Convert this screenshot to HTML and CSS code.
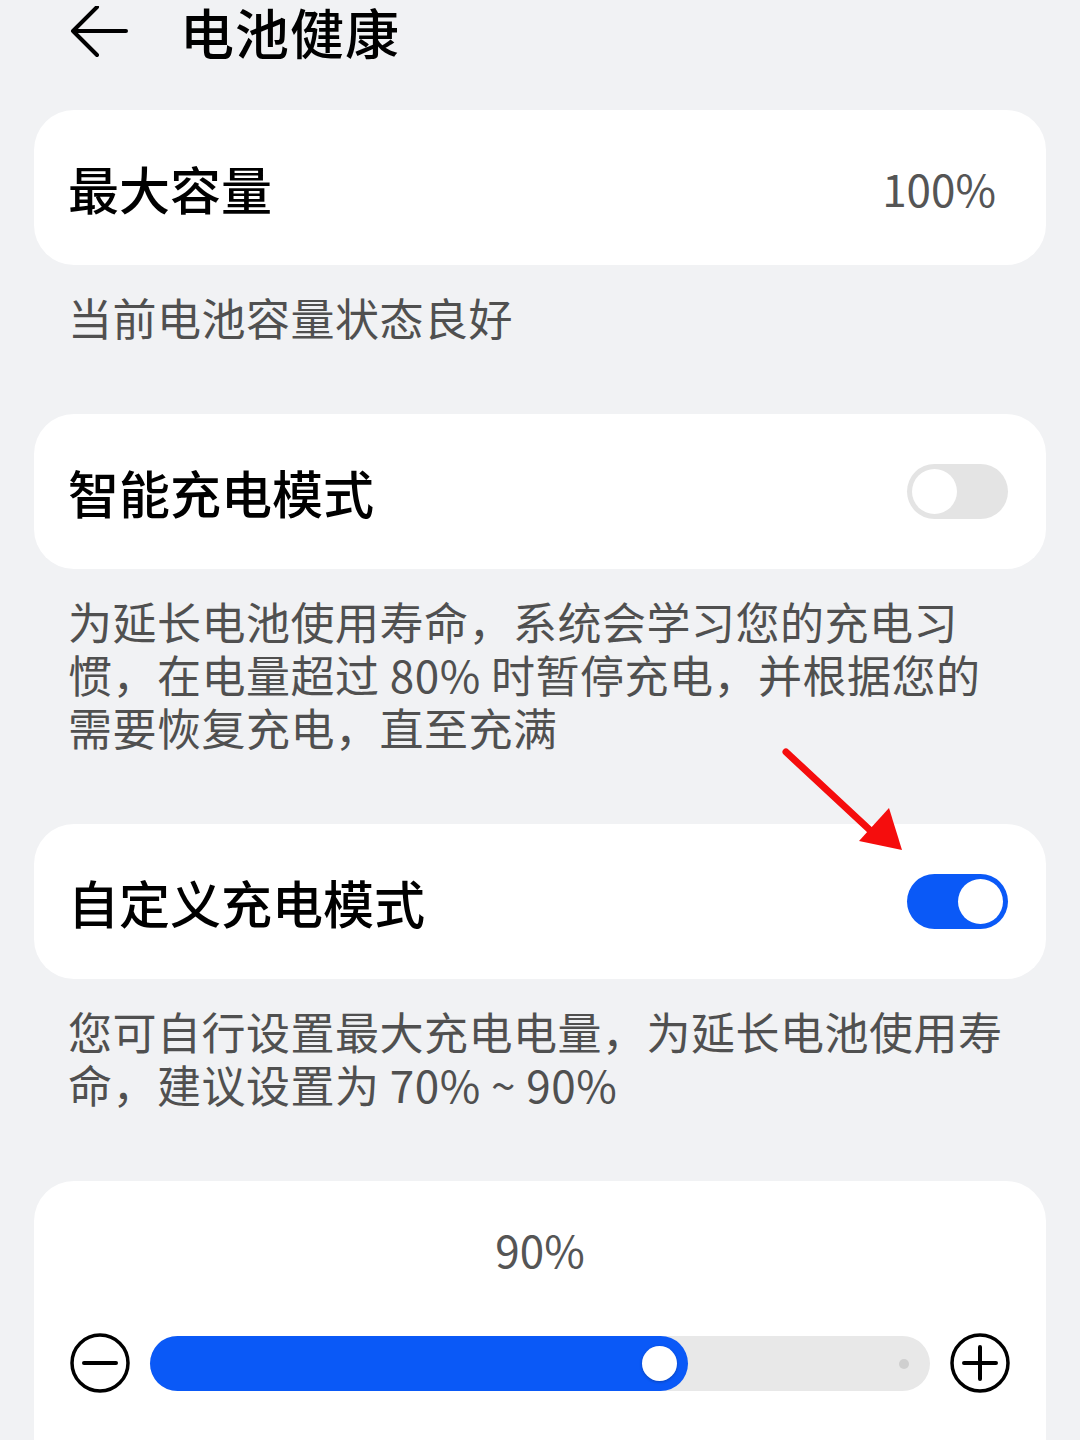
FILE: index.html
```html
<!DOCTYPE html>
<html lang="zh-CN">

<head>
    <meta charset="UTF-8">
    <meta name="viewport" content="width=device-width, initial-scale=1.0">
    <title>电池健康</title>
    <link rel="stylesheet" href="styles.css">
</head>

<body>
    <div class="page">
        <div class="header">
            <svg class="back" width="60" height="54" viewBox="0 0 60 54">
                <path d="M3 25 L56 25 M27 1 L3 25 L27 49" fill="none" stroke="#000" stroke-width="4" stroke-linecap="round" stroke-linejoin="round" />
            </svg>
            <h1 class="title">电池健康</h1>
        </div>

        <div class="card row">
            <span class="label">最大容量</span>
            <span class="value">100%</span>
        </div>
        <p class="desc">当前电池容量状态良好</p>

        <div class="card row">
            <span class="label">智能充电模式</span>
            <span class="switch"><i></i></span>
        </div>
        <p class="desc">为延长电池使用寿命，系统会学习您的充电习惯，在电量超过 80% 时暂停充电，并根据您的需要恢复充电，直至充满</p>

        <div class="card row">
            <span class="label">自定义充电模式</span>
            <span class="switch on"><i></i></span>
        </div>
        <p class="desc">您可自行设置最大充电电量，为延长电池使用寿命，建议设置为 70% ~ 90%</p>

        <div class="card slider-card">
            <div class="level">90%</div>
            <div class="slider">
                <svg class="step" width="62" height="62" viewBox="0 0 62 62">
                    <circle cx="31" cy="31" r="28" fill="none" stroke="#000" stroke-width="3.5" />
                    <path d="M15 31 H47" stroke="#000" stroke-width="4" stroke-linecap="round" />
                </svg>
                <div class="track">
                    <div class="fill" style="width: 69%"><span class="thumb"></span></div>
                    <span class="dot"></span>
                </div>
                <svg class="step" width="62" height="62" viewBox="0 0 62 62">
                    <circle cx="31" cy="31" r="28" fill="none" stroke="#000" stroke-width="3.5" />
                    <path d="M15 31 H47 M31 15 V47" stroke="#000" stroke-width="4" stroke-linecap="round" />
                </svg>
            </div>
        </div>

        <!-- 标注箭头 -->
        <svg class="mark" width="130" height="120" viewBox="0 0 130 120">
            <path d="M6 6 L92 86" stroke="#f50d0d" stroke-width="7" stroke-linecap="round" />
            <polygon points="109,62 122,104 79,95" fill="#f50d0d" />
        </svg>
    </div>
</body>

</html>
```

FILE: styles.css
```css
body,
h1,
p {
    margin: 0;
    padding: 0;
}

body {
    background: #f1f2f4;
    font-family: "Noto Sans CJK SC", "Noto Sans", sans-serif;
    color: #000;
}

.page {
    position: relative;
    width: 1080px;
    height: 1440px;
    overflow: hidden;
}

.header {
    display: flex;
    align-items: center;
    height: 64px;
    padding-left: 70px;
}

.back {
    display: block;
    margin-top: 2px;
}

.title {
    margin-left: 50px;
    font-size: 54px;
    font-weight: 500;
    line-height: 64px;
    letter-spacing: 1px;
}

.card {
    margin: 46px 34px 0;
    background: #fff;
    border-radius: 40px;
}

.card.row {
    display: flex;
    align-items: center;
    justify-content: space-between;
    height: 155px;
    padding: 0 38px 0 34px;
    box-sizing: border-box;
}

.label {
    font-size: 51px;
    font-weight: 500;
}

.value {
    margin-right: 12px;
    font-size: 44px;
    color: #555;
}

.desc {
    margin: 0 34px;
    padding: 26px 35px 70px 34px;
    font-size: 44px;
    line-height: 53px;
    letter-spacing: 0.5px;
    color: #505050;
}

.desc + .card {
    margin-top: 0;
}

.switch {
    position: relative;
    display: block;
    width: 101px;
    height: 55px;
    border-radius: 28px;
    background: #e4e4e4;
}

.switch i {
    position: absolute;
    top: 5px;
    left: 5px;
    width: 45px;
    height: 45px;
    border-radius: 50%;
    background: #fff;
}

.switch.on {
    background: #0a59f7;
}

.switch.on i {
    left: 51px;
}

.slider-card {
    height: 300px;
    padding-top: 42px;
    box-sizing: border-box;
}

.level {
    text-align: center;
    font-size: 44px;
    line-height: 53px;
    color: #555;
}

.slider {
    display: flex;
    align-items: center;
    gap: 19px;
    margin-top: 56px;
    padding: 0 35px;
}

.step {
    display: block;
    flex: none;
}

.track {
    position: relative;
    flex: 1;
    height: 55px;
    border-radius: 28px;
    background: #e8e8e8;
}

.fill {
    position: relative;
    height: 55px;
    border-radius: 28px;
    background: #0a59f7;
}

.thumb {
    position: absolute;
    right: 11px;
    top: 10px;
    width: 35px;
    height: 35px;
    border-radius: 50%;
    background: #fff;
    box-shadow: 0 1px 3px rgba(0, 0, 0, 0.25);
}

.dot {
    position: absolute;
    right: 21px;
    top: 23px;
    width: 10px;
    height: 10px;
    border-radius: 50%;
    background: #cfcfcf;
}

.mark {
    position: absolute;
    left: 780px;
    top: 746px;
}
```
